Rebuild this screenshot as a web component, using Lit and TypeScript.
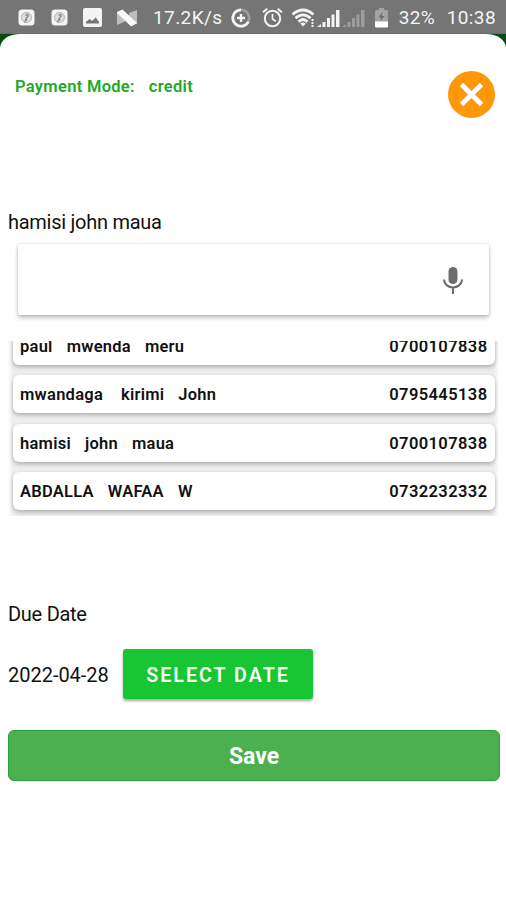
import { LitElement, html, css } from "lit";
import { customElement } from "lit/decorators.js";

interface Customer {
  names: string[];
  phone: string;
  wide?: boolean;
}

const customers: Customer[] = [
  { names: ["paul", "mwenda", "meru"], phone: "0700107838" },
  { names: ["mwandaga", "kirimi", "John"], phone: "0795445138", wide: true },
  { names: ["hamisi", "john", "maua"], phone: "0700107838" },
  { names: ["ABDALLA", "WAFAA", "W"], phone: "0732232332" },
];

@customElement("status-bar")
class StatusBar extends LitElement {
  static styles = css`
    :host {
      display: flex;
      align-items: center;
      box-sizing: border-box;
      height: 34px;
      padding: 2px 10px 0 18px;
      background: #757575;
      color: #f4f4f4;
      font: 400 19px/34px Roboto, sans-serif;
      border-bottom: 1px solid #6a6a6a;
      white-space: nowrap;
    }
    svg { flex: none; display: block; }
    .app { margin-right: 16px; }
    .app2 { margin-right: 15px; }
    .pic { margin-right: 14px; }
    .nougat { margin-right: 15px; }
    .speed { width: 78px; letter-spacing: 0.4px; }
    .saver { margin-right: 11px; }
    .alarm { margin-right: 9px; }
    .radio { margin-right: 8px; }
    .battery { margin-right: 10px; }
    .pct { width: 48px; letter-spacing: 0.3px; }
    .time { letter-spacing: 0.400px; }
  `;

  private appIcon(cls: string) {
    return html`<svg class=${cls} width="17" height="17" viewBox="0 0 17 17">
      <rect x="0.5" y="0.5" width="16" height="16" rx="3.5" fill="#f4f4f4" />
      <circle cx="8.5" cy="8.5" r="5" fill="#dedede" stroke="#b4b4b4" stroke-width="1" />
      <path d="M7.500 6.500l2-1.300.8 1.800-2.300 2.500-.8 2.500 2-1.800" fill="none" stroke="#858585" stroke-width="1.200" />
    </svg>`;
  }

  render() {
    return html`
      ${this.appIcon("app")} ${this.appIcon("app2")}
      <svg class="pic" width="19" height="19" viewBox="0 0 19 19">
        <rect width="19" height="19" rx="2" fill="#f4f4f4" />
        <path d="M3 15.500v-1.500l3.500-3 2.500 2 3.700-3.500 3.300 4.500v1.500z" fill="#757575" />
      </svg>
      <svg class="nougat" width="22" height="18" viewBox="0 0 22 18">
        <path d="M1 3h8v9.500l-8 3.500zM13 4l8-3v14l-8-4z" fill="#bdbdbd" />
        <path d="M1 3.500L6.500 1L20.500 14L15 17z" fill="#fafafa" stroke="#fafafa" stroke-linejoin="round" />
      </svg>
      <span class="speed">17.2K/s</span>
      <svg class="saver" width="20" height="20" viewBox="0 0 20 20" fill="none">
        <circle cx="10" cy="10" r="8.200" stroke="#a0a0a0" stroke-width="2.600" />
        <path d="M10 1.800a8.200 8.200 0 1 0 7.300 12" stroke="#f4f4f4" stroke-width="2.800" />
        <path d="M10 6v8M6 10h8" stroke="#f4f4f4" stroke-width="2.400" />
      </svg>
      <svg class="alarm" width="21" height="21" viewBox="0 0 21 21" fill="none" stroke="#f4f4f4">
        <circle cx="10.500" cy="11.500" r="7.700" stroke-width="2" />
        <path d="M10.500 7v5l3.300 2.200" stroke-width="1.700" />
        <path d="M1 5.300L5.300 1.700M20 5.300L15.700 1.700" stroke-width="2" />
      </svg>
      <svg class="radio" width="74" height="20" viewBox="0 0 74 20">
        <g fill="none" stroke="#f4f4f4" stroke-width="2.800">
          <path d="M.5 6.500Q11 -2.500 21.500 6.500" />
          <path d="M3.500 10.200Q11 3.500 18.500 10.200" />
          <path d="M6.500 13.800Q11 9.400 15.500 13.800" />
        </g>
        <path d="M8.200 15.500Q11 13.500 13.800 15.500L11 18.500z" fill="#f4f4f4" />
        <path d="M19.500 11h2v2h-2zM19.500 14h2v2h-2zM19.500 17h2v2h-2z" fill="#f4f4f4" />
        <path d="M25 19l4-3v3zM30.500 14h3v5h-3zM35 10h3v9h-3zM39.500 6.500h3V19h-3zM44 2h3.500v17H44z" fill="#f4f4f4" />
        <path d="M50 19l4-3v3zM55.500 14h3v5h-3zM60 10h3v9h-3zM64.500 6.500h3V19h-3zM69 2h3.500v17H69z" fill="#9c9c9c" />
      </svg>
      <svg class="battery" width="15" height="20" viewBox="0 0 15 20">
        <path d="M5 0h5v2h2.500q1.500 0 1.500 1.500V14H1V3.500Q1 2 2.500 2H5z" fill="#a3a3a3" />
        <path d="M1 13.500h13v5q0 1-1 1H2q-1 0-1-1z" fill="#fff" />
        <path d="M8.500 4L4.500 9.500H7L6.500 13 10.500 8H8z" fill="#6a6a6a" />
      </svg>
      <span class="pct">32%</span><span class="time">10:38</span>
    `;
  }
}

@customElement("app-root")
class AppRoot extends LitElement {
  static styles = css`
    :host {
      display: flex;
      flex-direction: column;
      height: 900px;
      overflow: hidden;
      background: #064d12;
      font-family: Roboto, sans-serif;
      color: #111;
    }
    .sheet {
      flex: 1;
      box-sizing: border-box;
      display: flex;
      flex-direction: column;
      padding: 37px 6px 0 8px;
      background: #fff;
      border-radius: 20px 20px 0 0 / 14px 14px 0 0;
      white-space: nowrap;
    }
    .head {
      display: flex;
      justify-content: space-between;
      height: 138px;
      padding: 0 5px 0 7px;
    }
    .mode {
      display: flex;
      gap: 14px;
      height: 20px;
      margin-top: 6px;
      font-size: 16.500px;
      line-height: 20px;
      font-weight: 600;
      letter-spacing: 0.300px;
      color: #22a82a;
    }
    .close { display: block; }
    .label { font-size: 20px; line-height: 24px; letter-spacing: -0.27px; }
    .search {
      display: flex;
      align-items: center;
      justify-content: flex-end;
      box-sizing: border-box;
      height: 71px;
      margin: 11px 11px 0 10px;
      padding-right: 26px;
      border-radius: 2px;
      background: #fff;
      box-shadow: 0 0 2px rgba(0, 0, 0, 0.2), 0 3px 4px rgba(0, 0, 0, 0.24);
    }
    .selected { padding-top: 1px; margin-bottom: -1px; }
    .list {
      display: flex;
      flex-direction: column;
      justify-content: flex-end;
      gap: 10.500px;
      box-sizing: border-box;
      height: 175px;
      margin: 26px 0 0;
      padding: 0 4.500px 6px 5px;
      width: 491px;
      overflow: hidden;
      background: linear-gradient(90deg, #fff 0, #ededed 5px, #ededed 486px, #fff 491px);
    }
    .row {
      flex: none;
      display: flex;
      justify-content: space-between;
      box-sizing: border-box;
      height: 38px;
      padding: 0 7px 0 7px;
      border-radius: 6px;
      background: #fff;
      box-shadow: 0 2px 4px rgba(0, 0, 0, 0.28);
      font-size: 16.500px;
      line-height: 39px;
      font-weight: 600;
      letter-spacing: 0.25px;
    }
    .phone { letter-spacing: 0.4px; margin-right: 0; }
    .names { display: flex; gap: 14px; }
    .wide span:first-child { margin-right: 4px; }
    .due { margin-top: 86px; }
    .date { display: flex; align-items: center; margin-top: 23px; height: 50px; }
    .value { width: 115px; padding-top: 2px; letter-spacing: -0.02px; }
    .select {
      width: 190px;
      height: 50px;
      border-radius: 3px;
      background: #17c632;
      color: #f3fff3;
      font-size: 19.700px;
      line-height: 53px;
      font-weight: 600;
      letter-spacing: 2px;
      text-align: center;
      box-shadow: 0 2px 3px rgba(0, 0, 0, 0.35);
    }
    .save {
      box-sizing: border-box;
      height: 51px;
      margin-top: 31px;
      border: 1px solid #2aa336;
      border-radius: 6px;
      background: #4caf50;
      color: #fff;
      font-size: 23px;
      line-height: 52px;
      font-weight: 700;
      text-align: center;
    }
  `;

  render() {
    return html`
      <status-bar></status-bar>
      <main class="sheet">
        <div class="head">
          <div class="mode"><span>Payment Mode:</span><span>credit</span></div>
          <svg class="close" width="47" height="47" viewBox="0 0 47 47">
            <circle cx="23.500" cy="23.500" r="23.500" fill="#ff9808" />
            <path d="M13.500 13.500l20 20M33.500 13.500l-20 20" stroke="#fff" stroke-width="4.800" />
          </svg>
        </div>
        <div class="label selected">hamisi john maua</div>
        <div class="search">
          <svg class="mic" width="20" height="28" viewBox="0 0 20 28">
            <rect x="5.500" y="1" width="9" height="17" rx="4.500" fill="#6c6c6c" />
            <path d="M1 13.500c.5 10.500 17.500 10.500 18 0M10 21.500V28" fill="none" stroke="#6c6c6c" stroke-width="2" />
          </svg>
        </div>
        <div class="list">
          ${customers.map(
            (c) => html`<div class="row">
              <div class="names ${c.wide ? "wide" : ""}">${c.names.map((n) => html`<span>${n}</span>`)}</div>
              <span class="phone">${c.phone}</span>
            </div>`
          )}
        </div>
        <div class="label due">Due Date</div>
        <div class="date">
          <span class="label value">2022-04-28</span>
          <div class="select">SELECT DATE</div>
        </div>
        <div class="save">Save</div>
      </main>
    `;
  }
}
